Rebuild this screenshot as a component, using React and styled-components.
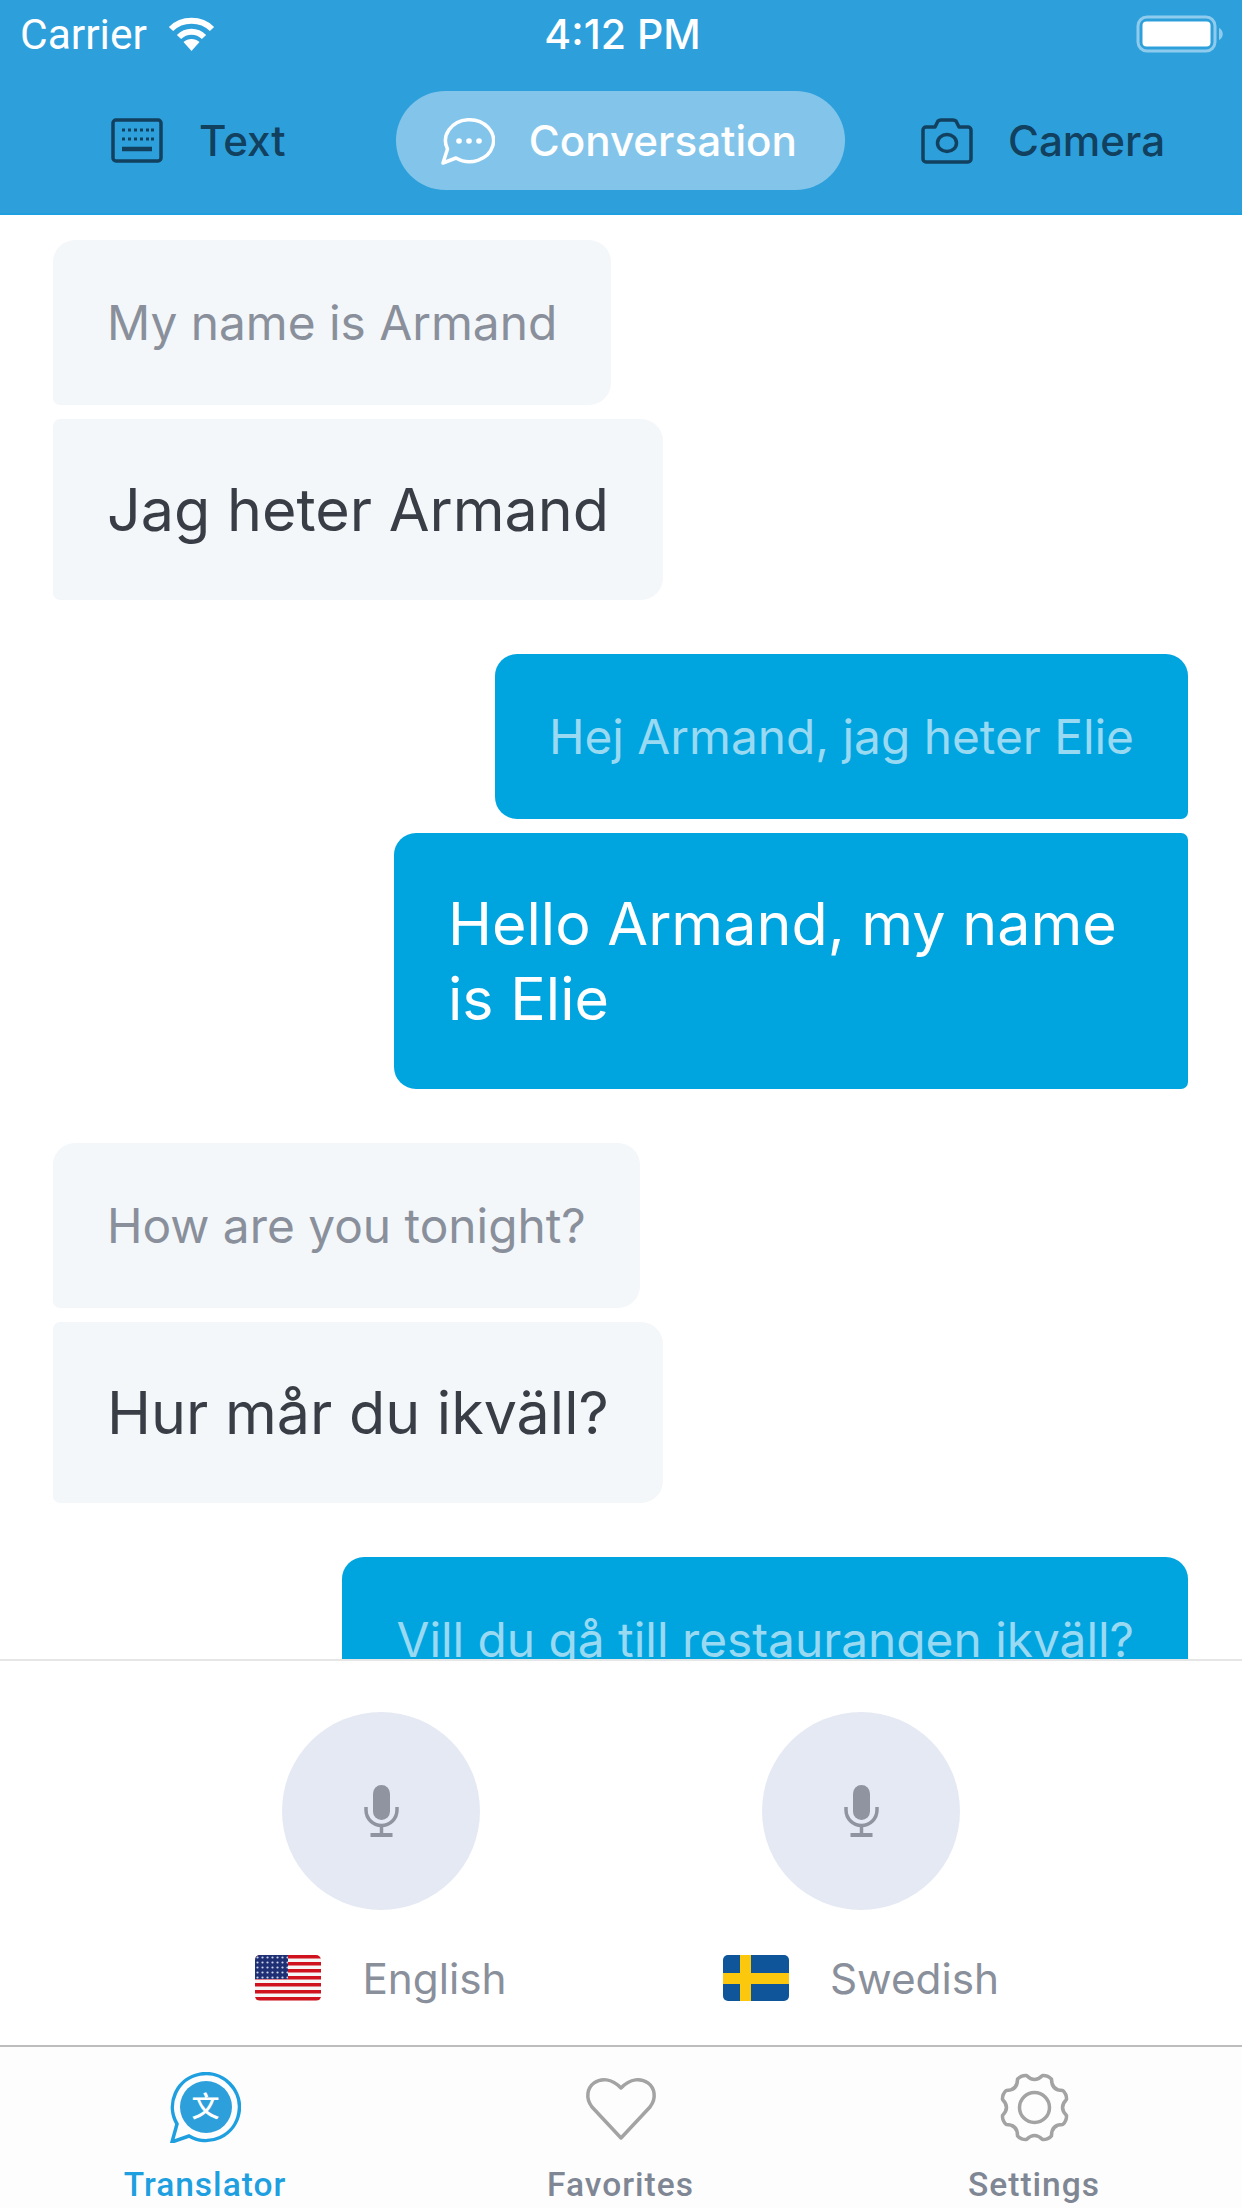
import React from 'react';
import styled, { createGlobalStyle } from 'styled-components';

const Global = createGlobalStyle`
  html, body { margin: 0; padding: 0; background: #fff; }
  * { box-sizing: border-box; }
  body { font-family: Inter, "Liberation Sans", sans-serif; }
`;
const Screen = styled.div`
  width: 1242px; height: 2208px; display: flex; flex-direction: column; overflow: hidden; background: #fff;
`;
const Header = styled.header`
  height: 215px; flex: none; background: #2da0dc; border-bottom: 2px solid #1e9fe0; display: flex; flex-direction: column;
`;
const StatusBar = styled.div`
  height: 68px; padding: 0 17px 0 20px; display: grid; grid-template-columns: 1fr auto 1fr; align-items: center; color: #fff; font-size: 42.5px; font-family: Roboto, Inter, sans-serif;
`;
const StatusLeft = styled.div`display: flex; align-items: center; gap: 21px;`;
const StatusTime = styled.div`font-weight: 500; font-family: Inter, sans-serif; font-size: 41px;`;
const StatusRight = styled.div`display: flex; justify-content: flex-end;`;
const Tabs = styled.nav`
  height: 99px; margin-top: 23px; display: flex; align-items: center;
`;
const Tab = styled.div`
  display: flex; align-items: center; height: 99px; border-radius: 50px; font-size: 42.2px; font-weight: 500;
  color: ${p => (p.$active ? '#fff' : '#12405f')};
  background: ${p => (p.$active ? '#83c5ea' : 'transparent')};
  margin-left: ${p => p.$ml}px; padding: 0 ${p => p.$pr}px 0 ${p => p.$pl}px; gap: ${p => p.$gap}px;
`;
const Content = styled.main`
  flex: 1; min-height: 0; overflow: hidden; padding: 25px 54px 0 53px; display: flex; flex-direction: column;
`;
const radii = {
  theirTop: '22px 22px 22px 7px',
  theirBottom: '7px 22px 22px 7px',
  mineTop: '22px 22px 7px 22px',
  mineBottom: '22px 7px 7px 22px',
};
const Bubble = styled.div`
  flex: none;
  padding: ${p => (p.$main ? '53px 54px 53px' : '37px 54px 35px')};
  font-size: ${p => (p.$main ? 59.2 : 47.8)}px;
  line-height: ${p => (p.$main ? 75 : 93)}px;
  max-width: ${p => (p.$wide ? 'none' : '794px')};
  align-self: ${p => (p.$me ? 'flex-end' : 'flex-start')};
  background: ${p => (p.$me ? '#00a5e0' : '#f3f7fa')};
  color: ${p => (p.$me ? (p.$main ? '#fff' : '#9ad9f2') : (p.$main ? '#393e46' : '#8a909b'))};
  border-radius: ${p => radii[(p.$me ? 'mine' : 'their') + (p.$main ? 'Bottom' : 'Top')]};
  margin-top: ${p => (p.$main ? 14 : 54)}px;
  &:first-child { margin-top: 0; }
`;
const Panel = styled.section`
  flex: none; height: 386px; border-top: 2px solid #e6e6e6; background: #fff; display: grid; grid-template-columns: 480px 480px; justify-content: center; padding-top: 51px;
`;
const Voice = styled.div`display: flex; flex-direction: column; align-items: center;`;
const Mic = styled.div`
  width: 198px; height: 198px; border-radius: 50%; background: #e5e9f3; display: flex; align-items: center; justify-content: center;
`;
const Lang = styled.div`
  margin-top: 45px; display: flex; align-items: center; gap: 41px; font-size: 42.3px; color: #8a909b; height: 46px;
`;
const Bar = styled.footer`
  flex: none; height: 163px; border-top: 2px solid #bdbdbd; background: #fdfdfd; display: grid; grid-template-columns: 410px 421px 406px;
`;
const BarItem = styled.div`
  display: flex; flex-direction: column; align-items: center; padding-top: 25px; font-size: 33.5px; font-weight: 500; letter-spacing: 1px; font-family: Roboto, Inter, sans-serif;
  color: ${p => (p.$active ? '#1e9fe0' : '#7f8694')};
`;
const IconSlot = styled.div`height: 71px; display: flex; align-items: center; justify-content: center;`;
const BarLabel = styled.span`margin-top: 22px; line-height: 40px;`;

const Wifi = () => (
  <svg width="47" height="34" viewBox="0 0 47 34"><g fill="none" stroke="#fff" strokeWidth="6"><path d="M3 12 C14 1 33 1 44 12"/><path d="M11 20 C18 13 29 13 36 20"/></g><path d="M15.500 25 C20 21 27 21 31.500 25 L23.500 34Z" fill="#fff"/></svg>
);
const Battery = () => (
  <svg width="89" height="38" viewBox="0 0 89 38"><rect x="2" y="2" width="77" height="34" rx="9" fill="none" stroke="#8ecbec" strokeWidth="3"/><rect x="6.500" y="6.500" width="68" height="25" rx="4" fill="#fff"/><path d="M83 13 C88 15 88 23 83 25Z" fill="#8ecbec"/></svg>
);
const Keyboard = () => (
  <svg width="52" height="45" viewBox="0 0 52 45"><rect x="2" y="2" width="48" height="41" rx="3" fill="none" stroke="#12405f" strokeWidth="3.500"/><path d="M11 31H41" stroke="#12405f" strokeWidth="4.500"/><g fill="#12405f">{[11,17,23,29,35,40].map(x=>[12,21].map(y=><rect key={x+'-'+y} x={x} y={y-1.500} width="3" height="3"/>))}</g></svg>
);
const Chat = () => (
  <svg width="54" height="48" viewBox="0 0 54 48"><path d="M6.500 32 L2 46 L15 41 A24 21 0 1 0 6.500 32Z" fill="none" stroke="#fff" strokeWidth="3.500" strokeLinejoin="round"/><g fill="#fff"><circle cx="18" cy="24" r="2.800"/><circle cx="28" cy="24" r="2.800"/><circle cx="38" cy="24" r="2.800"/></g></svg>
);
const Camera = () => (
  <svg width="52" height="46" viewBox="0 0 52 46"><path d="M5 9H14L17 3Q18 2 20 2H32Q34 2 35 3L38 9H47A3 3 0 0 1 50 12V41A3 3 0 0 1 47 44H5A3 3 0 0 1 2 41V12A3 3 0 0 1 5 9Z" fill="none" stroke="#12405f" strokeWidth="3.500" strokeLinejoin="round"/><ellipse cx="26" cy="25" rx="9.500" ry="8.500" fill="none" stroke="#12405f" strokeWidth="3.500"/></svg>
);
const MicIcon = () => (
  <svg width="35" height="52" viewBox="0 0 35 52"><rect x="9" y="0" width="17" height="35" rx="8.500" fill="#8f94a0"/><path d="M2 22V25A15.500 15.500 0 0 0 33 25V22" fill="none" stroke="#8f94a0" strokeWidth="3.500"/><path d="M17.500 40V49" stroke="#8f94a0" strokeWidth="3.500"/><rect x="6.500" y="48" width="22" height="4" fill="#8f94a0"/></svg>
);
const UsFlag = () => (
  <svg width="66" height="46" viewBox="0 0 66 46"><defs><clipPath id="fc"><rect width="66" height="46" rx="5"/></clipPath><pattern id="st" width="5" height="5" patternUnits="userSpaceOnUse"><circle cx="2.500" cy="2.500" r="1.100" fill="#c9d2e6"/></pattern></defs><g clipPath="url(#fc)"><rect width="66" height="46" fill="#f6f6f6"/>{[0,7,14,21,28,35,42].map(y=><rect key={y} y={y} width="66" height="3.500" fill="#d0121f"/>)}<rect width="33" height="24" fill="#1f2f74"/><rect width="33" height="24" fill="url(#st)"/></g></svg>
);
const SeFlag = () => (
  <svg width="66" height="46" viewBox="0 0 66 46"><defs><clipPath id="fd"><rect width="66" height="46" rx="5"/></clipPath></defs><g clipPath="url(#fd)"><rect width="66" height="46" fill="#0f5599"/><rect x="17" width="11" height="46" fill="#fcc80e"/><rect y="18" width="66" height="11" fill="#fcc80e"/></g></svg>
);
const TransIcon = () => (
  <svg width="71" height="71" viewBox="0 0 71 71"><path d="M7 52 L2 70 L19 64 A33.500 33.500 0 1 0 7 52Z" fill="none" stroke="#1e9fe0" strokeWidth="3.500"/><circle cx="36" cy="35" r="26" fill="#2da0dc"/><text x="36" y="45" textAnchor="middle" fontSize="28" fill="#fff" fontFamily='"Noto Sans CJK SC", sans-serif'>文</text></svg>
);
const Heart = () => (
  <svg width="74" height="67" viewBox="0 0 74 67"><path d="M37 64 L8 33 C-6 14 18 -6 37 14 C56 -6 80 14 66 33Z" fill="none" stroke="#a3a3a3" strokeWidth="3.500" strokeLinejoin="round"/></svg>
);
const gearPath = (() => {
  const n = 8;
  const s = Math.PI / n;
  const p = (r, t) => `${(35.500 + r * Math.cos(t)).toFixed(1)} ${(35.500 + r * Math.sin(t)).toFixed(1)}`;
  let d = '';
  for (let i = 0; i < n; i++) {
    const a = (i * 2 * Math.PI) / n - Math.PI / 2 + s;
    d += i === 0 ? `M${p(33, a - s * 0.38)}` : `Q${p(24, a - s)} ${p(33, a - s * 0.38)}`;
    d += ` Q${p(35, a)} ${p(33, a + s * 0.38)} `;
  }
  const a0 = -Math.PI / 2 + s;
  return `${d}Q${p(24, a0 - s)} ${p(33, a0 - s * 0.38)}Z`;
})();
const Gear = () => (
  <svg width="71" height="71" viewBox="0 0 71 71"><path d={gearPath} fill="none" stroke="#a3a3a3" strokeWidth="3.500" strokeLinejoin="round"/><circle cx="35.500" cy="35.500" r="15" fill="none" stroke="#a3a3a3" strokeWidth="3.500"/></svg>
);

const rows = [
  ['My name is Armand', 'Jag heter Armand', false],
  ['Hej Armand, jag heter Elie', 'Hello Armand, my name is Elie', true],
  ['How are you tonight?', 'Hur mår du ikväll?', false],
];

export default function App() {
  return (
    <Screen>
      <Global />
      <Header>
        <StatusBar>
          <StatusLeft>Carrier <Wifi /></StatusLeft>
          <StatusTime>4:12 PM</StatusTime>
          <StatusRight><Battery /></StatusRight>
        </StatusBar>
        <Tabs>
          <Tab $ml={111} $pl={0} $pr={0} $gap={36}><Keyboard />Text</Tab>
          <Tab $active $ml={110} $pl={45} $pr={48} $gap={34}><Chat />Conversation</Tab>
          <Tab $ml={76} $pl={0} $pr={0} $gap={35}><Camera />Camera</Tab>
        </Tabs>
      </Header>
      <Content>
        {rows.map(([a, b, me], i) => (
          <React.Fragment key={i}>
            <Bubble $me={me}>{a}</Bubble>
            <Bubble $me={me} $main>{b}</Bubble>
          </React.Fragment>
        ))}
        <Bubble $me $wide>Vill du gå till restaurangen ikväll?</Bubble>
      </Content>
      <Panel>
        <Voice><Mic><MicIcon /></Mic><Lang><UsFlag />English</Lang></Voice>
        <Voice><Mic><MicIcon /></Mic><Lang><SeFlag />Swedish</Lang></Voice>
      </Panel>
      <Bar>
        <BarItem $active><IconSlot><TransIcon /></IconSlot><BarLabel>Translator</BarLabel></BarItem>
        <BarItem><IconSlot><Heart /></IconSlot><BarLabel>Favorites</BarLabel></BarItem>
        <BarItem><IconSlot><Gear /></IconSlot><BarLabel>Settings</BarLabel></BarItem>
      </Bar>
    </Screen>
  );
}
